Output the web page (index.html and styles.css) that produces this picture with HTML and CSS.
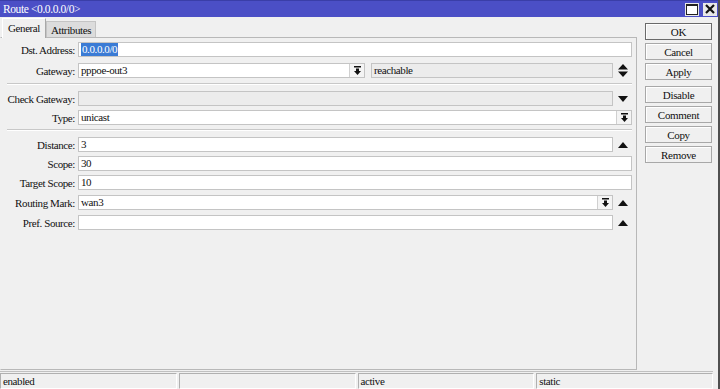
FILE: index.html
```html
<!DOCTYPE html>
<html lang="en">
<head>
    <meta charset="UTF-8">
    <title>Route &lt;0.0.0.0/0&gt;</title>
    <link rel="stylesheet" href="styles.css">
</head>
<body>
<div class="window">
    <div class="titlebar">
        <span class="title">Route &lt;0.0.0.0/0&gt;</span>
        <span class="tb-btns">
            <span class="tb-btn">
                <svg width="12" height="11" viewBox="0 0 12 11"><rect x="0.5" y="0.5" width="11" height="10" fill="#fff" stroke="#222"/><rect x="0" y="0" width="12" height="2" fill="#222"/></svg>
            </span>
            <span class="tb-btn">
                <svg width="10" height="10" viewBox="0 0 10 10"><path d="M1 1L9 9M9 1L1 9" stroke="#111" stroke-width="2.2"/></svg>
            </span>
        </span>
    </div>

    <div class="content">
        <div class="main">
            <div class="tabs">
                <span class="tab active">General</span>
                <span class="tab">Attributes</span>
            </div>
            <div class="panel">
                <div class="row">
                    <label>Dst. Address:</label>
                    <div class="field"><span class="sel">0.0.0.0/0</span></div>
                </div>
                <div class="row gap6">
                    <label>Gateway:</label>
                    <div class="field combo gw">pppoe-out3<span class="dd"><svg width="9" height="9" viewBox="0 0 9 9"><rect x="1" y="0" width="7" height="1.5" fill="#111"/><rect x="3" y="2.5" width="3" height="2.5" fill="#111"/><path d="M1 5h7L4.5 9z" fill="#111"/></svg></span></div>
                    <div class="field ro">reachable</div>
                    <span class="arrow">
                        <svg width="10" height="13" viewBox="0 0 10 13"><path d="M0 5.5h10L5 0z M0 7.5h10L5 13z" fill="#111"/></svg>
                    </span>
                </div>

                <div class="sep s1"></div>

                <div class="row">
                    <label>Check Gateway:</label>
                    <div class="field ro"></div>
                    <span class="arrow"><svg width="10" height="6" viewBox="0 0 10 6"><path d="M0 0h10L5 6z" fill="#111"/></svg></span>
                </div>
                <div class="row gap4">
                    <label>Type:</label>
                    <div class="field combo">unicast<span class="dd"><svg width="9" height="9" viewBox="0 0 9 9"><rect x="1" y="0" width="7" height="1.5" fill="#111"/><rect x="3" y="2.5" width="3" height="2.5" fill="#111"/><path d="M1 5h7L4.5 9z" fill="#111"/></svg></span></div>
                </div>

                <div class="sep s2"></div>

                <div class="row">
                    <label>Distance:</label>
                    <div class="field">3</div>
                    <span class="arrow"><svg width="10" height="6" viewBox="0 0 10 6"><path d="M0 6h10L5 0z" fill="#111"/></svg></span>
                </div>
                <div class="row gap4">
                    <label>Scope:</label>
                    <div class="field">30</div>
                </div>
                <div class="row gap4">
                    <label>Target Scope:</label>
                    <div class="field">10</div>
                </div>
                <div class="row gap5">
                    <label>Routing Mark:</label>
                    <div class="field combo">wan3<span class="dd"><svg width="9" height="9" viewBox="0 0 9 9"><rect x="1" y="0" width="7" height="1.5" fill="#111"/><rect x="3" y="2.5" width="3" height="2.5" fill="#111"/><path d="M1 5h7L4.5 9z" fill="#111"/></svg></span></div>
                    <span class="arrow"><svg width="10" height="6" viewBox="0 0 10 6"><path d="M0 6h10L5 0z" fill="#111"/></svg></span>
                </div>
                <div class="row gap5">
                    <label>Pref. Source:</label>
                    <div class="field"></div>
                    <span class="arrow"><svg width="10" height="6" viewBox="0 0 10 6"><path d="M0 6h10L5 0z" fill="#111"/></svg></span>
                </div>
            </div>
        </div>

        <div class="side">
            <button class="default">OK</button>
            <button>Cancel</button>
            <button>Apply</button>
            <button class="spaced">Disable</button>
            <button>Comment</button>
            <button>Copy</button>
            <button>Remove</button>
        </div>
    </div>

    <div class="statusbar">
        <span class="cell">enabled</span>
        <span class="cell"></span>
        <span class="cell">active</span>
        <span class="cell">static</span>
    </div>
</div>
</body>
</html>
```

FILE: styles.css
```css
body {
    margin: 0;
    background: #f0f0f0;
    font-family: "Liberation Serif", serif;
    font-size: 11px;
    letter-spacing: -0.4px;
    color: #111;
}
.window {
    width: 720px;
    height: 389px;
    box-sizing: border-box;
    border-right: 2px solid #505050;
    display: flex;
    flex-direction: column;
    background: #f0f0f0;
}
.titlebar {
    height: 17px;
    background: #4b4fc6;
    border-top: 1px solid #3a3ea8;
    box-sizing: border-box;
    display: flex;
    align-items: center;
    justify-content: space-between;
    color: #fff;
    font-size: 11.5px;
}
.title { padding-left: 3px; }
.tb-btns { display: flex; gap: 4px; padding-right: 1px; }
.tb-btn {
    width: 14px;
    height: 13px;
    background: #e8e8e8;
    display: flex;
    align-items: center;
    justify-content: center;
}
.content {
    flex: 1;
    display: flex;
}
.main {
    width: 637px;
    display: flex;
    flex-direction: column;
}
.tabs {
    height: 20px;
    display: flex;
    align-items: flex-end;
    padding-left: 2px;
}
.tab {
    height: 16px;
    padding: 0 4px;
    background: #dcdcdc;
    border: 1px solid #c4c4c4;
    border-bottom: none;
    line-height: 16px;
    box-sizing: border-box;
}
.tab.active {
    height: 20px;
    line-height: 18px;
    background: #f0f0f0;
    border-color: #fff #a8a8a8 #f0f0f0 #fff;
    padding: 0 5px;
    position: relative;
    top: 1px;
}
.panel {
    flex: 1;
    border: 1px solid #b8b8b8;
    border-left-color: #f0f0f0;
    margin-bottom: 1px;
    padding: 4px 4px 0 0;
}
.row {
    display: flex;
    height: 15px;
    align-items: center;
}
.row.gap4 { margin-top: 4px; }
.row.gap5 { margin-top: 5px; }
.row.gap6 { margin-top: 6px; }
.row label {
    width: 77px;
    padding-right: 3px;
    box-sizing: border-box;
    text-align: right;
    white-space: nowrap;
}
.field {
    flex: 1;
    height: 15px;
    box-sizing: border-box;
    border: 1px solid #c4c4c4;
    background: #fff;
    padding-left: 2px;
    line-height: 13px;
    display: flex;
    align-items: center;
}
.field.ro { background: #ececec; }
.field.gw {
    flex: none;
    width: 287px;
    margin-right: 6px;
}
.combo .dd {
    margin-left: auto;
    width: 15px;
    height: 13px;
    box-sizing: border-box;
    border-left: 1px solid #d0d0d0;
    background: #f4f4f4;
    display: flex;
    align-items: center;
    justify-content: center;
}
.sel {
    background: #3a7bd5;
    color: #fff;
    padding: 0 1px;
}
.arrow {
    width: 18px;
    display: flex;
    justify-content: center;
    padding-left: 1px;
}
.sep {
    height: 1px;
    background: #c8c8c8;
    border-bottom: 1px solid #fff;
    margin-left: 6px;
}
.sep.s1 { margin-top: 5px; margin-bottom: 6px; }
.sep.s2 { margin-top: 4px; margin-bottom: 6px; }
.side {
    flex: 1;
    padding: 6px 0 0 8px;
    display: flex;
    flex-direction: column;
    gap: 3px;
}
button {
    width: 67px;
    height: 17px;
    padding: 0;
    font-family: "Liberation Serif", serif;
    font-size: 11px;
    letter-spacing: -0.3px;
    color: #111;
    background: #f0f0f0;
    border: 1px solid #a8a8a8;
    box-shadow: inset 1px 1px 0 #fff;
}
button.default { border-color: #6a6a6a; }
button.spaced { margin-top: 3px; }
.statusbar {
    height: 18px;
    display: flex;
    border-top: 1px solid #c0c0c0;
    margin-right: 5px;
    padding-top: 1px;
    box-sizing: border-box;
    gap: 2px;
}
.cell {
    flex: 1;
    border: 1px solid #b0b0b0;
    border-right-color: #fff;
    border-bottom-color: #fff;
    padding-left: 2px;
    line-height: 15px;
}
```
